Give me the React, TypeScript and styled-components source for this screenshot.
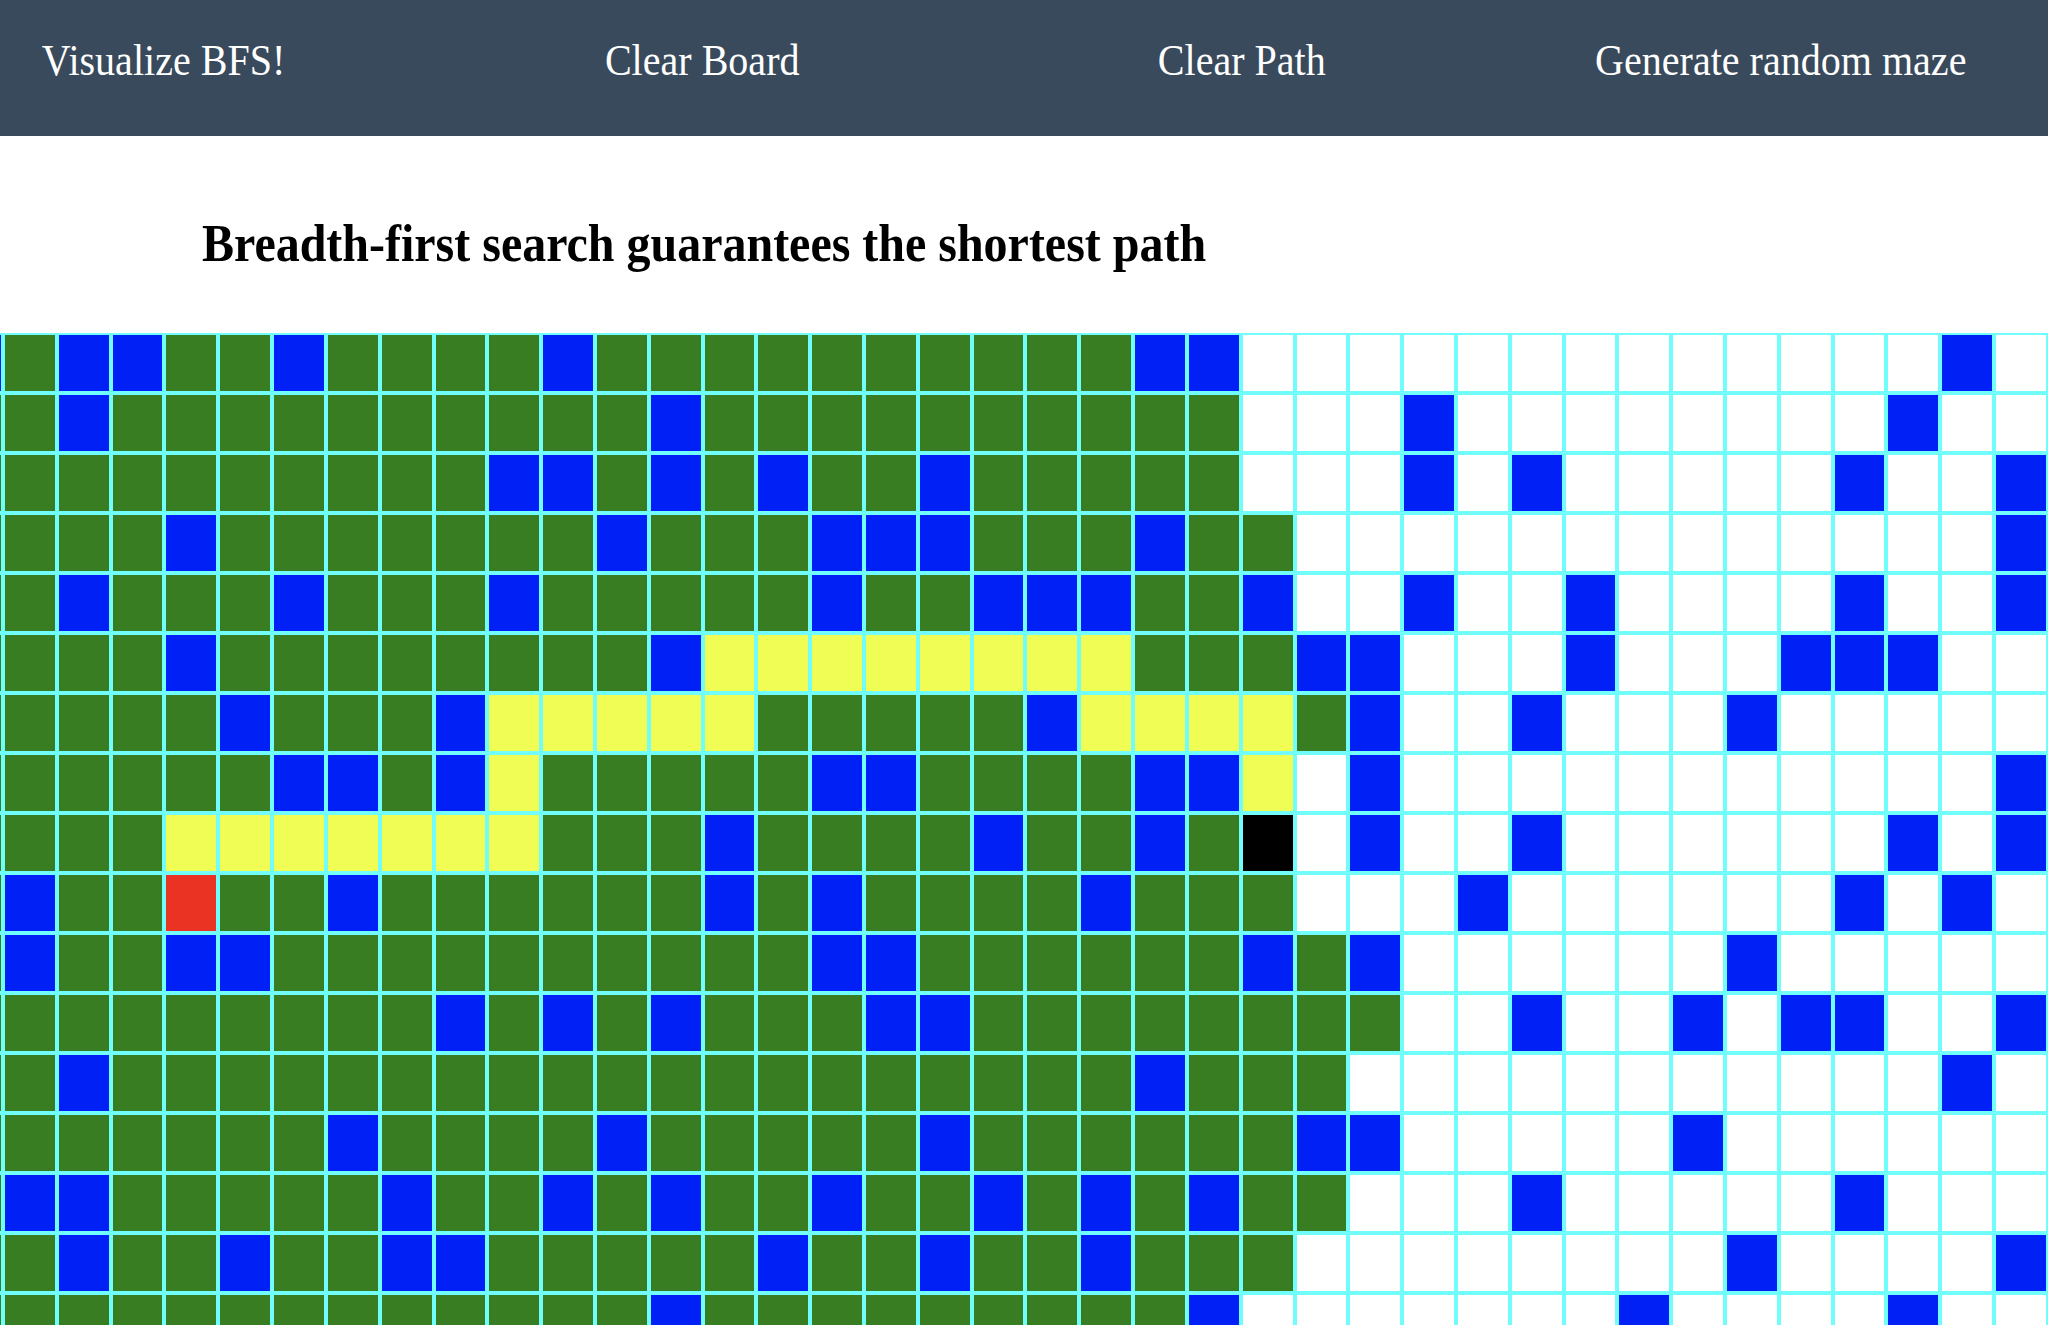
import React from "react";
import styled, { createGlobalStyle } from "styled-components";

const GlobalStyle = createGlobalStyle`
  html, body {
    margin: 0;
    padding: 0;
    background: #ffffff;
    overflow: hidden;
  }
  body {
    font-family: "Liberation Serif", "Times New Roman", serif;
  }
`;

type Kind = "g" | "b" | "w" | "y" | "r" | "k";

const COLORS: Record<Kind, string> = {
  g: "#387d22",
  b: "#0020f6",
  w: "#ffffff",
  y: "#effd55",
  r: "#ea3323",
  k: "#000000",
};

const COLS = 38;

interface RowSpec {
  visited: number;
  walls: number[];
  path?: number[];
  start?: number;
  target?: number;
  edge?: Kind;
}

const range = (a: number, b: number) =>
  Array.from({ length: b - a + 1 }, (_, i) => a + i);

const ROWS: RowSpec[] = [
  { visited: 22, walls: [1, 2, 5, 10, 21, 22, 36], edge: "b" },
  { visited: 22, walls: [1, 12, 26, 35] },
  { visited: 22, walls: [9, 10, 12, 14, 17, 26, 28, 34, 37] },
  { visited: 23, walls: [3, 11, 15, 16, 17, 21, 37] },
  { visited: 22, walls: [1, 5, 9, 15, 18, 19, 20, 23, 26, 29, 34, 37] },
  { visited: 23, walls: [3, 12, 24, 25, 29, 33, 34, 35], path: range(13, 20) },
  { visited: 24, walls: [4, 8, 19, 25, 28, 32], path: [...range(9, 13), ...range(20, 23)] },
  { visited: 23, walls: [5, 6, 8, 15, 16, 21, 22, 25, 37], path: [9, 23] },
  { visited: 23, walls: [13, 18, 21, 25, 28, 35, 37], path: range(3, 9), target: 23 },
  { visited: 23, walls: [0, 6, 13, 15, 20, 27, 34, 36], start: 3 },
  { visited: 24, walls: [0, 3, 4, 15, 16, 23, 25, 32] },
  { visited: 25, walls: [8, 10, 12, 16, 17, 28, 31, 33, 34, 37] },
  { visited: 24, walls: [1, 21, 36] },
  { visited: 23, walls: [6, 11, 17, 24, 25, 31] },
  { visited: 24, walls: [0, 1, 7, 10, 12, 15, 18, 20, 22, 28, 34] },
  { visited: 23, walls: [1, 4, 7, 8, 14, 17, 20, 32, 37] },
  { visited: 21, walls: [12, 22, 30, 35] },
];

const buildRow = (spec: RowSpec): Kind[] => {
  const cells: Kind[] = [];
  cells.push(spec.edge ?? "g");
  for (let c = 0; c < COLS; c++) {
    let k: Kind = c <= spec.visited ? "g" : "w";
    if (spec.walls.includes(c)) k = "b";
    if (spec.path?.includes(c)) k = "y";
    if (spec.start === c) k = "r";
    if (spec.target === c) k = "k";
    cells.push(k);
  }
  return cells;
};

const Page = styled.div`
  width: 2048px;
  height: 1325px;
  overflow: hidden;
  background: #ffffff;
`;

const NavBar = styled.nav`
  height: 136px;
  background: #394a5c;
  box-sizing: border-box;
  padding-top: 38px;
  overflow: hidden;
`;

const NavList = styled.ul`
  list-style: none;
  margin: 0 -2px 0 -106px;
  padding: 0;
  display: grid;
  grid-template-columns: repeat(4, 1fr);
`;

const NavItem = styled.li`
  display: flex;
  justify-content: center;
  color: #ffffff;
  font-size: 43.3px;
  line-height: 45px;
  cursor: pointer;
  white-space: nowrap;
`;

/* the reference is rendered slightly condensed horizontally */
const Condensed = styled.span`
  display: inline-block;
  transform: scaleX(0.925);
  transform-origin: center;
`;

const Heading = styled.h1`
  margin: 0;
  padding: 80px 0 0 202px;
  height: 197px;
  box-sizing: border-box;
  font-size: 53.3px;
  line-height: 56px;
  font-weight: bold;
  color: #000000;
  white-space: nowrap;
`;

const HeadingText = styled.span`
  display: inline-block;
  transform: scaleX(0.9);
  transform-origin: left center;
`;

const Board = styled.div`
  display: grid;
  grid-template-columns: repeat(${COLS + 1}, 53.816px);
  grid-auto-rows: 60px;
  margin-left: -50.816px;
`;

const Cell = styled.div<{ $kind: Kind }>`
  box-sizing: border-box;
  border: 2px solid #72fdfd;
  background: ${(p) => COLORS[p.$kind]};
`;

const NAV_ITEMS = [
  "Visualize BFS!",
  "Clear Board",
  "Clear Path",
  "Generate random maze",
];

export default function App() {
  const grid = ROWS.map(buildRow);
  return (
    <Page>
      <GlobalStyle />
      <NavBar>
        <NavList>
          {NAV_ITEMS.map((t) => (
            <NavItem key={t}>
              <Condensed>{t}</Condensed>
            </NavItem>
          ))}
        </NavList>
      </NavBar>
      <Heading>
        <HeadingText>Breadth-first search guarantees the shortest path</HeadingText>
      </Heading>
      <Board>
        {grid.map((row, r) =>
          row.map((k, c) => <Cell key={`${r}-${c}`} $kind={k} />)
        )}
      </Board>
    </Page>
  );
}
